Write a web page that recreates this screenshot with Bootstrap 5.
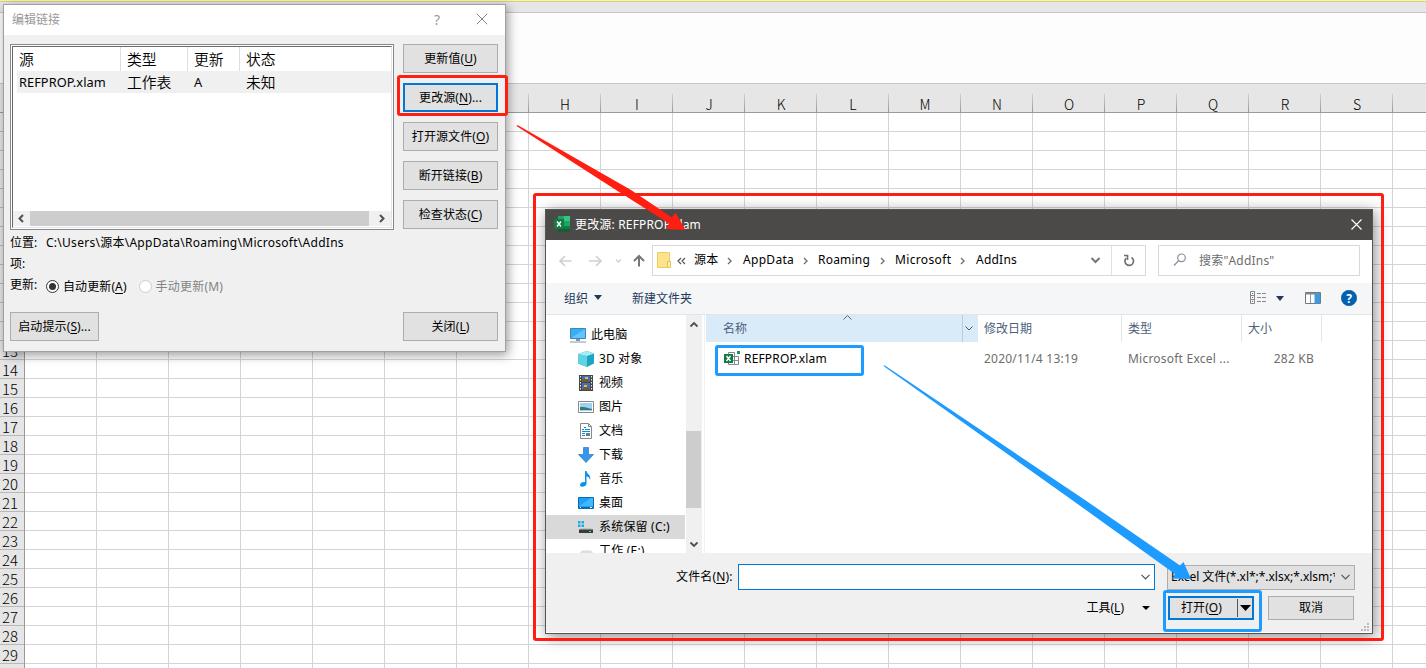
<!DOCTYPE html>
<html lang="zh-CN">
<head>
<meta charset="utf-8">
<title>编辑链接</title>
<link href="https://cdn.jsdelivr.net/npm/bootstrap@5.3.0/dist/css/bootstrap.min.css" rel="stylesheet">
<script src="https://cdn.jsdelivr.net/npm/bootstrap@5.3.0/dist/js/bootstrap.bundle.min.js"></script>
<style>
body{width:1426px;height:668px;font:12px/16px "Noto Sans","Noto Sans CJK SC",sans-serif;color:#000;background:#fff}
svg{display:block;flex:none}
u{text-underline-offset:2px}
/* worksheet */
.yellowbar{height:2px;background:#f8f2b0;border-bottom:1px solid #d6d286}
.graybar{height:11px;background:#e6e6e6;border-bottom:1px solid #c6c6c6}
.formula{height:71px;background:#fdfdfd;border-bottom:1px solid #c6c6c6}
.colheads{height:29px;background:#e6e6e6;border-bottom:1px solid #999;padding-left:25px;overflow:hidden}
.colheads>div{width:72px;flex:none;text-align:center;padding-top:10px;background:linear-gradient(#d0d0d0,#999) right bottom/1px 18px no-repeat}
.sheetfont{font-family:"Noto Sans CJK SC",sans-serif;font-weight:300;font-size:14px;line-height:20px}
.rowheads{width:25px;background:#e6e6e6;border-right:1px solid #999}
.rowheads>div{height:19px;border-bottom:1px solid #b8b8b8;padding-left:2px;line-height:20px;font-size:15px}
.cells{background:repeating-linear-gradient(90deg,transparent 0 71px,#d4d4d4 71px 72px),repeating-linear-gradient(transparent 0 18px,#d4d4d4 18px 19px),#fff}
/* windows */
.win1{left:3px;top:4px;width:503px;height:348px;border:1px solid #a0a0a0;background:#f0f0f0;box-shadow:2px 3px 10px rgba(0,0,0,.4)}
.win1 .caption1{height:30px;background:#fff;color:#999;padding:0 17px 0 8px}
.wbtn{width:95px;height:29px;background:#e1e1e1;border:1px solid #adadad;display:flex;align-items:center;justify-content:center;white-space:nowrap;flex:none;letter-spacing:.1px}
.wbtn.focus{border:2px solid #0078d7}
.listbox{width:384px;height:186px;border:1px solid #828790;padding:1px;background:#fff}
.listbox>div{border:1px solid #696969;border-right-color:#e3e3e3;border-bottom-color:#e3e3e3;height:182px}
.lrow{font:14.8px/24px "Noto Sans CJK SC",sans-serif;font-weight:350}
.lrow>*{flex:none}
.lhead{height:24px}
.lhead>div{border-right:1px solid #dedede;padding-left:6px}
.lsel{height:22px;background:#f0f0f0;margin-left:4px;line-height:22px}
.lat{font-family:"Noto Sans","Noto Sans CJK SC",sans-serif;font-size:12.8px;font-weight:400}
.hscroll{height:15px;background:#f0f0f0;margin-bottom:1px}
.hscroll .thumb{width:340px;height:15px;background:#cdcdcd}
.win2{left:545px;top:209px;width:828px;height:425px;border:1px solid #555;background:#fff;box-shadow:2px 3px 14px rgba(0,0,0,.45)}
.caption2{height:30px;background:#4c4a48;color:#fff;padding:0 10px 0 8px}
.addr{height:43px;padding:5px 12px 0 12px}
.boxed{height:31px;border:1px solid #d9d9d9;background:#fff}
.crumb{letter-spacing:.22px;flex:none;white-space:nowrap;position:relative;top:-1px}
.tools{height:32px;background:#f5f6f7;border-bottom:1px solid #e5e5e5;color:#1e395b;padding:0 15px 0 18px}
.mid{height:238px}
.tree{width:139px;overflow:hidden;padding-top:8px}
.tree>div{height:24px;padding-left:32px;gap:5px;white-space:nowrap;letter-spacing:.1px}
.tree>div:first-child{padding-left:24px}
.tree .sel{background:#d9d9d9}
.vscroll{width:16px;margin-left:1px;background:#f0f0f0;padding:6px 0 5px}
.vscroll .thumb{width:15px;height:77px;background:#cdcdcd;margin-top:103px;margin-right:auto}
.thead2{height:27px;color:#4c607a}
.thead2>div{padding-left:6px;border-right:1px solid #e5e5e5;display:flex;align-items:center}
.thead2 .namecol{width:272px;background:#d9ebf9;border:0;padding-left:17px}
.frow{height:34px;color:#6d6d6d;letter-spacing:.22px}
.bottom{height:79px;background:#f0f0f0}
.fname{width:417px;height:26px;border:1px solid #0078d7;background:#fff}
.combo{width:188px;height:25px;background:#e1e1e1;border:1px solid #adadad}
/* annotations */
.ring{position:absolute;border:3px solid #ff1e12;border-radius:3px}
.ring.blue{border-color:#1e9bff}
</style>
</head>
<body class="position-relative overflow-hidden">
<main class="d-flex flex-column h-100 sheetfont">
  <div class="yellowbar flex-shrink-0"></div><div class="graybar flex-shrink-0"></div><div class="formula flex-shrink-0"></div>
  <div class="colheads d-flex flex-shrink-0" id="cols"></div>
  <div class="d-flex flex-fill overflow-hidden" style="min-height:0"><div class="rowheads" id="rows"></div><div class="cells flex-fill"></div></div>
</main>

<section class="win1 position-absolute">
  <div class="caption1 d-flex align-items-center"><span class="me-auto">编辑链接</span><span style="font-size:14px;margin-right:36px">?</span>
    <svg width="12" height="12" stroke="#888" fill="none" style="margin-top:-2px"><path d="M.8.8l10.4 10.4M11.2.8L.8 11.2"/></svg></div>
  <div class="d-flex" style="padding:9px 0 0 6px;gap:9px">
    <div class="listbox"><div class="d-flex flex-column">
      <div class="lrow lhead d-flex"><div style="width:108px">源</div><div style="width:67px">类型</div><div style="width:52px">更新</div><div class="border-0">状态</div></div>
      <div class="lrow lsel d-flex"><span class="lat" style="width:110px;padding-left:2px;letter-spacing:.05px">REFPROP.xlam</span><span style="width:67px">工作表</span><span class="lat" style="width:52px">A</span><span>未知</span></div>
      <div class="hscroll d-flex align-items-center mt-auto">
        <svg width="17" height="15" fill="none" stroke="#505050" stroke-width="2"><path d="M10 4L6.500 7.500l3.500 3.500"/></svg><div class="thumb"></div>
        <svg width="22" height="15" fill="none" stroke="#505050" stroke-width="2"><path d="M11 4l3.500 3.500L11 11"/></svg></div>
    </div></div>
    <div class="d-flex flex-column" style="gap:10px">
      <div class="wbtn"><span>更新值(<u>U</u>)</span></div><div class="wbtn focus"><span>更改源(<u>N</u>)...</span></div><div class="wbtn"><span>打开源文件(<u>O</u>)</span></div><div class="wbtn"><span>断开链接(<u>B</u>)</span></div><div class="wbtn"><span>检查状态(<u>C</u>)</span></div>
    </div>
  </div>
  <div style="padding:5px 0 0 6px">
    <div class="d-flex"><span style="width:36px">位置:</span><span style="letter-spacing:.27px">C:\Users\源本\AppData\Roaming\Microsoft\AddIns</span></div>
    <div style="padding-top:5px">项:</div>
    <div class="d-flex" style="padding-top:5px"><span style="width:36px">更新:</span>
      <svg width="13" height="13" style="margin-top:3px"><circle cx="6.500" cy="6.500" r="6" fill="#fff" stroke="#333"/><circle cx="6.500" cy="6.500" r="3.500" fill="#333"/></svg>
      <span style="padding:2px 12px 0 4px;letter-spacing:.1px">自动更新(<u>A</u>)</span>
      <svg width="13" height="13" style="margin-top:3px"><circle cx="6.500" cy="6.500" r="6" fill="#fff" stroke="#ccc"/></svg>
      <span style="padding:2px 0 0 4px;color:#838383;letter-spacing:.2px">手动更新(M)</span></div>
  </div>
  <div class="d-flex justify-content-between" style="padding:17px 7px 0 6px"><div class="wbtn" style="width:89px"><span>启动提示(<u>S</u>)...</span></div><div class="wbtn"><span>关闭(<u>L</u>)</span></div></div>
</section>

<section class="win2 position-absolute">
  <div class="caption2 d-flex align-items-center">
    <svg width="16" height="16" style="margin-top:-2px"><path d="M4 0h12v16H4z" fill="#21a366"/><path d="M4 4h6v5H4z" fill="#107c41"/><path d="M10 0h6v5h-6z" fill="#33c481"/><path d="M4 10h12v6H4z" fill="#185c37"/><path d="M10 10h6v3h-6z" fill="#107c41"/><path d="M0 3h10v10H0z" fill="#107c41"/><path d="M3 5.500l4 5M7 5.500l-4 5" stroke="#fff" stroke-width="1.500"/></svg>
    <span class="me-auto" style="padding-left:5px;letter-spacing:.17px">更改源: REFPROP.xlam</span>
    <svg width="11" height="11" stroke="#fff" stroke-width="1.200" style="margin-top:-2px"><path d="M.5.5l10 10M10.500.5l-10 10"/></svg></div>
  <div class="addr d-flex">
    <svg width="94" height="31" fill="none" stroke="#d0d0d0" stroke-width="1.700"><path d="M13.500 16H2m5-5l-5 5 5 5M31 16h12m-5-5l5 5-5 5"/><path d="M58 14.500l2.500 2.500 2.500-2.500" stroke-width="1.300"/><path d="M81 21.500V11m-5 5l5-5 5 5" stroke="#777" stroke-width="2"/></svg>
    <div class="boxed d-flex align-items-center" style="width:494px">
      <svg width="14" height="18" style="margin:-2px 6px 0 4px"><path d="M.5 1.500h12v15H.5z" fill="#ffe28c" stroke="#efcc5e"/><path d="M10.500 10.500h3v6h-3z" fill="#fff0b5" stroke="#e8c052"/></svg>
      <svg width="9" height="8" fill="none" stroke="#555" stroke-width="1.200"><path d="M4 1L1 4l3 3M8 1L5 4l3 3"/></svg>
      <span class="crumb" style="width:33px;margin-left:8px">源本</span><svg width="6" height="8" fill="none" stroke="#707070" stroke-width="1.400"><path d="M1 1l3 3-3 3"/></svg>
      <span class="crumb" style="width:60px;margin-left:10px;letter-spacing:.3px">AppData</span><svg width="6" height="8" fill="none" stroke="#707070" stroke-width="1.400"><path d="M1 1l3 3-3 3"/></svg>
      <span class="crumb" style="width:62px;margin-left:9px">Roaming</span><svg width="6" height="8" fill="none" stroke="#707070" stroke-width="1.400"><path d="M1 1l3 3-3 3"/></svg>
      <span class="crumb" style="width:65px;margin-left:9px;letter-spacing:.35px">Microsoft</span><svg width="6" height="8" fill="none" stroke="#707070" stroke-width="1.400"><path d="M1 1l3 3-3 3"/></svg>
      <span class="crumb me-auto" style="margin-left:10px">AddIns</span>
      <svg width="11" height="7" fill="none" stroke="#777" stroke-width="2" style="margin-right:10px"><path d="M1.500 1l4 4 4-4"/></svg>
      <div class="h-100 border-start d-flex align-items-center justify-content-center" style="width:34px"><svg width="12" height="13" fill="none" stroke="#707070" stroke-width="1.700"><path d="M8.500 3.500a4.300 4.300 0 1 1-5.500.8"/><path d="M1 1.500h3.500V6"/></svg></div>
    </div>
    <div class="boxed d-flex align-items-center" style="width:202px;margin-left:12px;color:#6d6d6d">
      <svg width="14" height="14" fill="none" stroke="#8a8a9a" stroke-width="1.200" style="margin:-2px 12px 0 14px"><circle cx="8.500" cy="4.800" r="3.800"/><path d="M5.700 7.500L1 12.500"/></svg><span style="letter-spacing:.2px">搜索"AddIns"</span></div>
  </div>
  <div class="tools d-flex align-items-center">
    <span>组织</span><svg width="8" height="5" style="margin:-2px 30px 0 6px"><path d="M0 0h8L4 5z" fill="#1e395b"/></svg><span class="me-auto">新建文件夹</span>
    <svg width="17" height="13" fill="none" stroke="#888" style="margin:-2px 0 0"><path d="M.5.5h4v12h-4zM.5 4.500h4M.5 8.500h4M7 2.500h4M12 2.500h4M7 6.500h4M12 6.500h4M7 10.500h4M12 10.500h4"/><path d="M2 2.500h1M2 6.500h1" stroke="#2684c8"/><path d="M2 10.500h1" stroke="#d33"/></svg>
    <svg width="8" height="5" style="margin:-1px 21px 0 9px"><path d="M0 0h8L4 5z" fill="#1e395b"/></svg>
    <svg width="16" height="12" style="margin-top:-2px"><path d="M.5.5h15v11H.5z" fill="#fff" stroke="#777"/><path d="M1 1h14v1.500H1z" fill="#7a8c99"/><path d="M5.500 2v9" stroke="#999"/><path d="M9.500 2H15v9.500H9.500z" fill="#3b9ae1"/></svg>
    <svg width="16" height="16" style="margin:-2px 0 0 20px"><circle cx="8" cy="8" r="7.700" fill="#0063b1" stroke="#0b4b91" stroke-width=".6"/><text x="8" y="12.500" fill="#fff" font-size="12" font-weight="700" text-anchor="middle">?</text></svg>
  </div>
  <div class="mid d-flex">
    <div class="tree">
      <div class="d-flex align-items-center"><svg width="16" height="16"><path d="M.5 1.500h15v10H.5z" fill="#38aef5" stroke="#3a87b8"/><path d="M1 11L15 2v9z" fill="#62c4ff"/><path d="M6 12h4v2H6zM0 14.500h16v1H0z" fill="#8299aa"/></svg>此电脑</div>
      <div class="d-flex align-items-center"><svg width="16" height="16"><path d="M0 3l9-3 7 2.500v10L9 16l-9-3.500z" fill="#1ea5c4"/><path d="M0 3l9 2v11l-9-3.500z" fill="#5fd3e3"/><path d="M0 3l9-3 7 2.500L9 5z" fill="#a5eef4"/></svg>3D 对象</div>
      <div class="d-flex align-items-center"><svg width="16" height="16"><path d="M1 0h14v16H1z" fill="#454545"/><path d="M4 1h8v6H4zM4 8h8v7H4z" fill="#3f70c4"/><path d="M4 5l4-1 4 2v1H4zM4 14l5-3 3 3v1H4z" fill="#76592c"/><path d="M7 2h3v2H7zM6 10h3v2H6z" fill="#f0b73e"/><path d="M2.500 1v14M13.500 1v14" stroke="#eee" stroke-dasharray="1.500 1.500"/></svg>视频</div>
      <div class="d-flex align-items-center"><svg width="16" height="16"><path d="M.5 2.500h15v11H.5z" fill="#fff" stroke="#888"/><path d="M2 4h12v8H2z" fill="#9dd2f4"/><path d="M2 8l4 0 8 2v1H2z" fill="#3e7772"/></svg>图片</div>
      <div class="d-flex align-items-center"><svg width="16" height="16" fill="none"><path d="M2.500.5h8l3 3v12h-11z" fill="#fff" stroke="#888"/><path d="M10.500.5v3h3" stroke="#888"/><path d="M4 6.500h2M6 4.500h2M7 6.500h5M4 8.500h8M4 10.500h3M4 12.500h3" stroke="#1687d0"/><path d="M8 10h4v3H8z" fill="#56869f"/></svg>文档</div>
      <div class="d-flex align-items-center"><svg width="16" height="16"><path d="M5.500.5h5v7h5L8 15.500.5 7.500h5z" fill="#3596eb" stroke="#287abb" stroke-width=".7"/></svg>下载</div>
      <div class="d-flex align-items-center"><svg width="16" height="16"><path d="M7 0h1.500c.3 3.500 5 3.500 3.500 9-.2-2.500-2-3.500-3.500-3.500V13c-.5 3-6.500 4-6.500 1 0-2.500 3-3.500 5-3z" fill="#0e91ee"/></svg>音乐</div>
      <div class="d-flex align-items-center"><svg width="16" height="16"><path d="M.5 2.500h15v11H.5z" fill="#18a0fb" stroke="#0f68aa"/><path d="M1 11L13 3h2v8z" fill="#42b8ff"/><path d="M1 12.500h14" stroke="#126ba4"/><path d="M2 12.500h1M12 12.500h2" stroke="#fff"/></svg>桌面</div>
      <div class="d-flex align-items-center sel"><svg width="16" height="16"><path d="M0 2h2.500v2.500H0zM3.500 2H6v2.500H3.500zM0 5.500h2.500V8H0zM3.500 5.500H6V8H3.500z" fill="#18aee8"/><path d="M3 9h10l2 2H1z" fill="#c0c0c0"/><path d="M1 10.500h14V14H1z" fill="#3b3b3b"/><path d="M11 12h2v1h-2z" fill="#3be06c"/></svg><span style="letter-spacing:.2px">系统保留 (C:)</span></div>
      <div class="d-flex align-items-center"><svg width="16" height="16"><path d="M4 7.500h9l2 2.500H2z" fill="#ddd"/><path d="M1 10h14v4H1z" fill="#ccc"/></svg><span style="letter-spacing:.2px">工作 (E:)</span></div>
    </div>
    <div class="vscroll d-flex flex-column align-items-center">
      <svg width="10" height="7" fill="none" stroke="#505050" stroke-width="1.800"><path d="M1.500 5.500L5 2l3.500 3.500"/></svg><div class="thumb"></div>
      <svg class="mt-auto" width="10" height="7" fill="none" stroke="#505050" stroke-width="1.800"><path d="M1.500 1.500L5 5l3.500-3.500"/></svg></div>
    <div class="flex-fill" style="margin-left:2px;border-left:1px solid #f0f0f0;padding-left:1px">
      <div class="thead2 d-flex">
        <div class="namecol"><span>名称</span><svg width="9" height="5" fill="none" stroke="#666" style="margin:-22px 110px 0 auto"><path d="M.5 4.500l4-4 4 4"/></svg><div class="h-100 d-flex align-items-center justify-content-center" style="width:16px;padding-right:3px;border-left:1px solid #b5cfe2"><svg width="8" height="5" fill="none" stroke="#555"><path d="M.5.5L4 4 7.500.5"/></svg></div></div>
        <div style="width:144px">修改日期</div><div style="width:120px">类型</div><div style="width:80px">大小</div>
      </div>
      <div class="frow d-flex align-items-center">
        <div class="d-flex align-items-center text-black" style="width:278px;padding-left:18px;letter-spacing:.17px"><svg width="16" height="16" style="margin:-2px 4px 0 0"><path d="M4.500 2.500h6v12h-6zM10.500 6.500h4v8h-4zM7 6.500h7M7 10.500h7" fill="#fff" stroke="#888"/><path d="M0 4h9v9H0z" fill="#107c41"/><path d="M2.500 6l4 5M6.500 6l-4 5" stroke="#fff" stroke-width="1.400"/><path d="M13 1h3v3h-3z" fill="#159a57"/></svg>REFPROP.xlam</div>
        <div style="width:144px">2020/11/4 13:19</div><div style="width:120px">Microsoft Excel ...</div><div class="text-end" style="width:66px">282 KB</div>
      </div>
    </div>
  </div>
  <div class="bottom">
    <div class="d-flex align-items-center" style="padding:11px 17px 0 130px"><span style="width:62px;letter-spacing:.15px">文件名(<u>N</u>):</span>
      <div class="fname d-flex align-items-center justify-content-end pe-1"><svg width="9" height="6" fill="none" stroke="#555" stroke-width="1.200"><path d="M.5.8l4 4 4-4"/></svg></div>
      <div class="combo d-flex align-items-center justify-content-between" style="margin-left:12px;padding:0 4px 0 3px"><span class="overflow-hidden text-nowrap" style="width:164px;letter-spacing:-.03px">Excel 文件(*.xl*;*.xlsx;*.xlsm;*.xlam)</span><svg width="9" height="6" fill="none" stroke="#555" stroke-width="1.200"><path d="M.5.8l4 4 4-4"/></svg></div></div>
    <div class="d-flex align-items-center justify-content-end" style="padding:6px 18px 0 0">
      <span>工具(<u>L</u>)</span><svg width="8" height="4" style="margin:0 18px"><path d="M0 0h8L4 4z"/></svg>
      <div class="wbtn focus" style="width:86px;height:24px"><span class="flex-fill text-center" style="padding-right:4px">打开(<u>O</u>)</span><div class="d-flex align-items-center" style="height:18px;border-left:1px solid #555;padding:0 1px 0 2px"><svg width="11" height="6"><path d="M0 0h11L5.500 6z"/></svg></div></div>
      <div class="wbtn" style="width:86px;height:24px;margin-left:14px">取消</div></div>
  </div>
  <svg class="position-absolute" style="right:3px;bottom:2px" width="8" height="8" fill="#bcbcbc"><path d="M6 0h2v2H6zM3 3h2v2H3zM6 3h2v2H6zM0 6h2v2H0zM3 6h2v2H3zM6 6h2v2H6z"/></svg>
</section>

<div class="ring" style="left:397px;top:75px;width:111px;height:41px"></div>
<div class="ring" style="left:533px;top:193px;width:851px;height:448px"></div>
<div class="ring blue" style="left:715px;top:345px;width:149px;height:31px"></div>
<div class="ring blue" style="left:1163px;top:590px;width:99px;height:42px"></div>
<svg class="position-absolute top-0 start-0" width="1426" height="668">
  <path d="M516.500 126l1-1L631 190l41 27.500 3.500-5L685.500 230l-19.500-1 3-5.500L616 190z" fill="#ff1e12"/>
  <path d="M883.500 366l1-.7L1085 500l95 65.500 3.500-3.500 7.500 17-19-.5 3-4.500L1072 500z" fill="#1e9bff"/>
</svg>
<script>
// headers covered by the dialog stay blank
document.getElementById('cols').innerHTML = [...'       HIJKLMNOPQRS '].map(c => `<div>${c}</div>`).join('');
document.getElementById('rows').innerHTML = Array.from({length: 30}, (_, i) => `<div>${i > 11 && i < 29 ? i + 1 : ''}</div>`).join('');
</script>
</body>
</html>
